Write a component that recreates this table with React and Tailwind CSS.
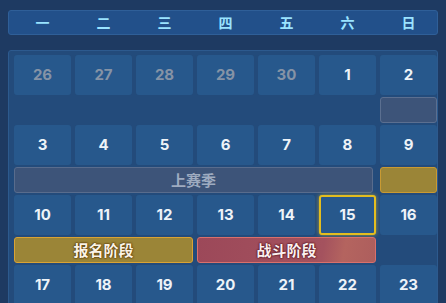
import React from "react";

const weekdays = ["一", "二", "三", "四", "五", "六", "日"];

const weeks = [
  [26, 27, 28, 29, 30, 1, 2],
  [3, 4, 5, 6, 7, 8, 9],
  [10, 11, 12, 13, 14, 15, 16],
  [17, 18, 19, 20, 21, 22, 23],
];

const DayCell = ({ day, muted, selected }) => (
  <div
    className={`h-[40px] rounded-[3px] flex items-center justify-center text-[15px] font-bold ${
      selected
        ? "bg-[#27588c] border-2 border-[#e3bd1f] shadow-[0_0_4px_rgba(240,200,40,0.6)]"
        : "bg-[#27588c]"
    } ${muted ? "text-[#8593a6]" : "text-[#eef3f8]"}`}
  >
    {day}
  </div>
);

const Track = ({ children }) => (
  <div className="grid grid-cols-[repeat(7,57px)] gap-x-1 h-[30px] py-[2px]">{children}</div>
);

const App = () => {
  return (
    <div
      className="w-[446px] h-[303px] overflow-hidden bg-[#1e3a62] pt-[10px] px-2"
      style={{ fontFamily: '"Inter", "Noto Sans CJK SC", sans-serif' }}
    >
      <div className="h-[25px] rounded-[3px] border border-[#2f5f98] bg-[#22508a] px-[5px] grid grid-cols-[repeat(7,57px)] gap-x-1 items-center">
        {weekdays.map((w) => (
          <div
            key={w}
            className="text-center text-[14px] font-bold text-[#9ae3ff]"
            style={{ fontFamily: '"Noto Sans CJK SC", sans-serif' }}
          >
            {w}
          </div>
        ))}
      </div>

      <div className="mt-[15px] rounded-[3px] border border-[#2d5a8e] bg-[#234b7b] px-[5px] pt-[4px] h-[300px]">
        <div className="grid grid-cols-[repeat(7,57px)] gap-x-1">
          {weeks[0].map((d, i) => (
            <DayCell key={i} day={d} muted={i < 5} />
          ))}
        </div>
        <Track>
          <div className="col-start-7 rounded-[3px] border border-[#5b6f90] bg-[#3d5479]" />
        </Track>

        <div className="grid grid-cols-[repeat(7,57px)] gap-x-1">
          {weeks[1].map((d, i) => (
            <DayCell key={i} day={d} />
          ))}
        </div>
        <Track>
          <div
            className="col-start-1 col-span-6 mr-[3px] rounded-[3px] border border-[#586c8d] bg-[#3d5479] flex items-center justify-center text-[15px] font-bold text-[#9eabc0]"
            style={{ fontFamily: '"Noto Sans CJK SC", sans-serif' }}
          >
            上赛季
          </div>
          <div className="col-start-7 rounded-[3px] border border-[#c99a32] bg-[#9b8537]" />
        </Track>

        <div className="grid grid-cols-[repeat(7,57px)] gap-x-1">
          {weeks[2].map((d, i) => (
            <DayCell key={i} day={d} selected={d === 15} />
          ))}
        </div>
        <Track>
          <div
            className="col-start-1 col-span-3 rounded-[3px] border border-[#d9a334] bg-[#9b8537] flex items-center justify-center text-[15px] font-bold text-[#fbf4e6] [text-shadow:0_0_2px_#5a3a08,0_0_2px_#5a3a08,0_0_1px_#5a3a08]"
            style={{ fontFamily: '"Noto Sans CJK SC", sans-serif' }}
          >
            报名阶段
          </div>
          <div
            className="col-start-4 col-span-3 rounded-[3px] border border-[#d9706b] bg-[linear-gradient(100deg,#9c4859_0%,#a4525e_70%,#b4645f_82%,#ad5e5d_100%)] flex items-center justify-center text-[15px] font-bold text-[#fbf0f0] [text-shadow:0_0_2px_#5a1420,0_0_2px_#5a1420,0_0_1px_#5a1420]"
            style={{ fontFamily: '"Noto Sans CJK SC", sans-serif' }}
          >
            战斗阶段
          </div>
        </Track>

        <div className="grid grid-cols-[repeat(7,57px)] gap-x-1">
          {weeks[3].map((d, i) => (
            <DayCell key={i} day={d} />
          ))}
        </div>
      </div>
    </div>
  );
};

export default App;
